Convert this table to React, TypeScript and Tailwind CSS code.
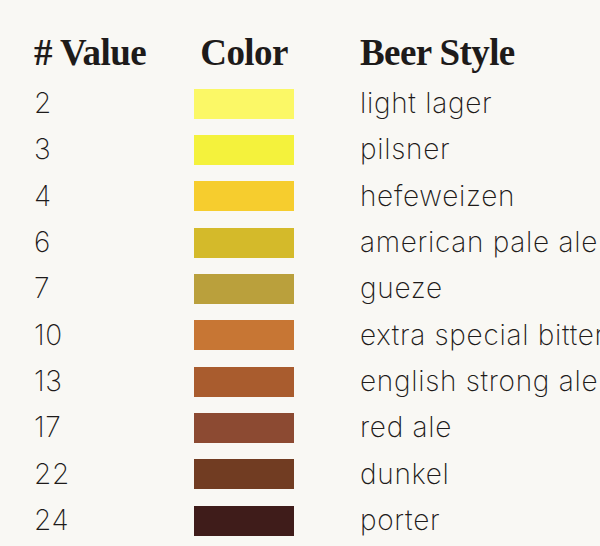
const rows = [
  { v: "2", c: "#fbf866", s: "light lager" },
  { v: "3", c: "#f4f23c", s: "pilsner" },
  { v: "4", c: "#f6cd2e", s: "hefeweizen" },
  { v: "6", c: "#d4ba2a", s: "american pale ale" },
  { v: "7", c: "#baa03c", s: "gueze" },
  { v: "10", c: "#c77634", s: "extra special bitter" },
  { v: "13", c: "#a95c2e", s: "english strong ale" },
  { v: "17", c: "#8c4a32", s: "red ale" },
  { v: "22", c: "#713c22", s: "dunkel" },
  { v: "24", c: "#3f1c1a", s: "porter" },
];

export default function App() {
  return (
    <div className="w-[600px] h-[546px] overflow-hidden bg-[#f9f8f4] text-[#1e1b1a] pl-[34px] pt-[34px]">
      <div className="flex items-end h-[47px] font-['Liberation_Serif',serif] font-bold text-[37px] leading-none whitespace-nowrap tracking-[-0.6px]">
        <div className="w-[160px] shrink-0">
          <span className="block pb-[10px]"># Value</span>
        </div>
        <div className="w-[100px] shrink-0 text-center">
          <span className="block pb-[10px]">Color</span>
        </div>
        <div className="ml-[66px] shrink-0">
          <span className="block pb-[10px]">Beer Style</span>
        </div>
      </div>
      <div className="font-['Inter',sans-serif] font-[250] text-[28px] leading-none whitespace-nowrap tracking-[0.7px] -mt-[1px]">
        {rows.map((r) => (
          <div key={r.v} className="flex items-center h-[46.33px]">
            <div className="w-[160px] shrink-0">{r.v}</div>
            <div className="w-[100px] h-[30px] shrink-0 mt-[1px]" style={{ backgroundColor: r.c }} />
            <div className="ml-[66px] shrink-0">{r.s}</div>
          </div>
        ))}
      </div>
    </div>
  );
}
